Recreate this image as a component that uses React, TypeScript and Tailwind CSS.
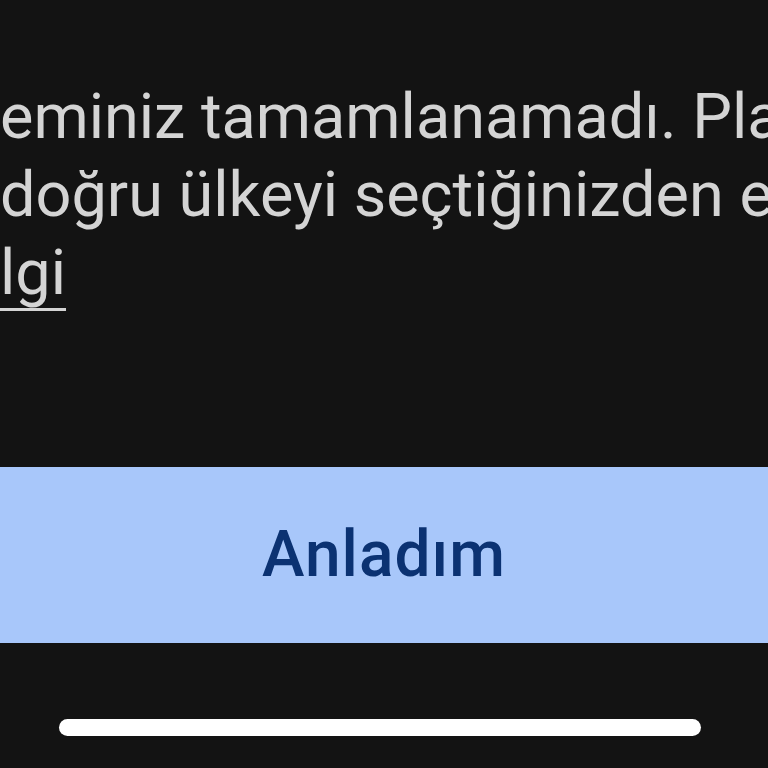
export default function App() {
  return (
    <div className="flex h-[768px] w-[768px] flex-col overflow-hidden bg-[#131313] font-['Roboto',sans-serif]">
      {/* Message */}
      <div className="overflow-hidden pt-[78px] text-[63px] leading-[78px] text-[#d4d4d4]">
        <div className="whitespace-nowrap">eminiz tamamlanamadı. Play</div>
        <div className="whitespace-nowrap">doğru ülkeyi seçtiğinizden emin</div>
        <div className="whitespace-nowrap">
          <span className="underline decoration-[3px] underline-offset-[14px]">lgi</span>
        </div>
      </div>

      {/* Button */}
      <button className="mt-[155px] flex h-[176px] w-full items-center justify-center bg-[#a8c7fa] text-[64px] font-medium tracking-[1px] text-[#0b3272]">
        Anladım
      </button>

      {/* Home indicator */}
      <div className="ml-[59px] mt-[76px] h-[17px] w-[642px] rounded-full bg-white" />
    </div>
  );
}
